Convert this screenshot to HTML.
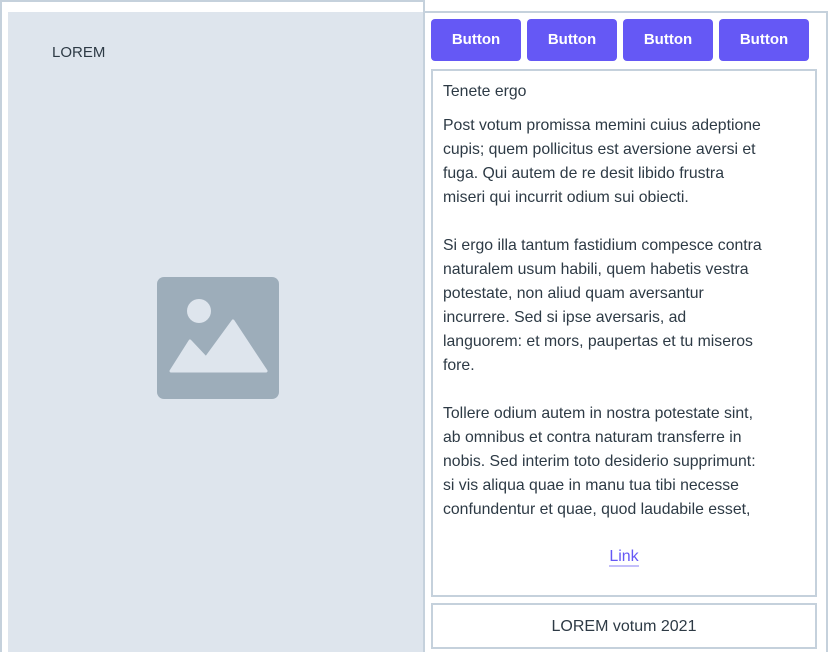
<!DOCTYPE html>
<html style="overflow:hidden;height:652px"><head><style>
*{margin:0;padding:0;box-sizing:border-box}
html,body{width:828px;height:652px;overflow:hidden}
body{background:#fff;font-family:"Liberation Sans",sans-serif;color:#2d3a45;position:relative}
.lp{position:absolute;left:0;top:0;width:425px;height:652px;border:2px solid #c5d1dc;border-bottom:none}
.gray{position:absolute;left:8px;top:12px;width:415px;height:640px;background:#dee5ed}
.lorem{position:absolute;left:52px;top:44px;font-size:15px}
.rt{position:absolute;left:423px;top:11px;width:405px;height:641px;border:2px solid #c5d1dc;border-left:none;border-bottom:none}
.btn{position:absolute;top:19px;width:90px;height:42px;background:#6558f5;border-radius:4px;color:#fff;font-weight:bold;font-size:15px;text-align:center;line-height:42px}
.box{position:absolute;left:431px;top:69px;width:386px;height:528px;border:2px solid #c5d1dc}
.txt{position:absolute;left:10px;top:9px;font-size:15.8px;line-height:24px;white-space:nowrap}
.link{position:absolute;left:0;right:0;top:477px;text-align:center;font-size:16px;color:#6558f5}
.link span{border-bottom:2px solid #c3bffa}
.foot{position:absolute;left:431px;top:603px;width:386px;height:46px;border:2px solid #c5d1dc;text-align:center;line-height:44px;font-size:16px}
</style></head><body>
<div class="lp"></div>
<div class="gray"></div>
<div class="lorem">LOREM</div>
<svg style="position:absolute;left:157px;top:277px" width="122" height="122" viewBox="0 0 122 122">
<rect width="122" height="122" rx="7" fill="#9dadba"/>
<circle cx="42" cy="34" r="12" fill="#dee5ed"/>
<path d="M14 94 L33 64 L49 81 L76 44 L109 94 Z" fill="#dee5ed" stroke="#dee5ed" stroke-width="3" stroke-linejoin="round"/>
</svg>
<div class="rt"></div>
<div class="btn" style="left:431px">Button</div>
<div class="btn" style="left:527px">Button</div>
<div class="btn" style="left:623px">Button</div>
<div class="btn" style="left:719px">Button</div>
<div class="box">
<div class="txt">Tenete ergo<div style="height:10px"></div>Post votum promissa memini cuius adeptione<br>cupis; quem pollicitus est aversione aversi et<br>fuga. Qui autem de re desit libido frustra<br>miseri qui incurrit odium sui obiecti.<br><br>Si ergo illa tantum fastidium compesce contra<br>naturalem usum habili, quem habetis vestra<br>potestate, non aliud quam aversantur<br>incurrere. Sed si ipse aversaris, ad<br>languorem: et mors, paupertas et tu miseros<br>fore.<br><br>Tollere odium autem in nostra potestate sint,<br>ab omnibus et contra naturam transferre in<br>nobis. Sed interim toto desiderio supprimunt:<br>si vis aliqua quae in manu tua tibi necesse<br>confundentur et quae, quod laudabile esset,</div>
<div class="link"><span>Link</span></div>
</div>
<div class="foot">LOREM votum 2021</div>
</body></html>
